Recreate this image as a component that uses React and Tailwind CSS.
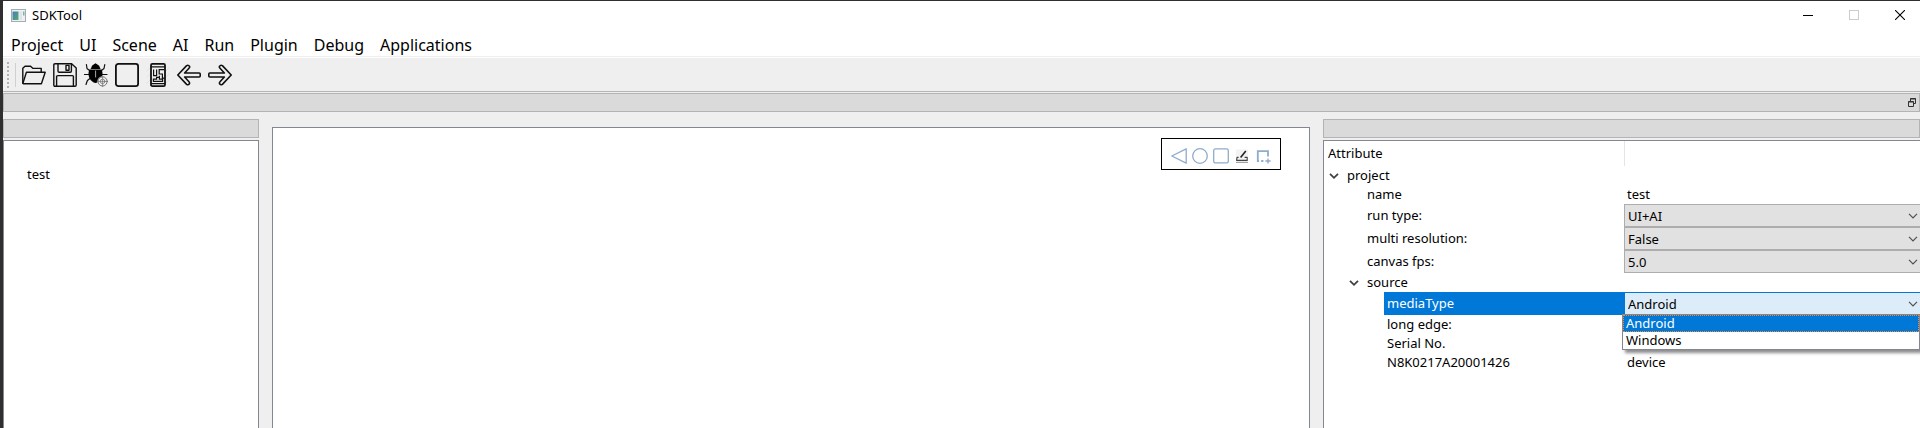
import { useState } from "react";

const MENUS = ["Project", "UI", "Scene", "AI", "Run", "Plugin", "Debug", "Applications"];

function Icon({ children, size = 24, view = 24, className = "" }) {
  return (
    <svg
      width={size}
      height={size}
      viewBox={`0 0 ${view} ${view}`}
      fill="none"
      stroke="#111"
      strokeWidth="1.4"
      strokeLinejoin="round"
      strokeLinecap="round"
      className={`shrink-0 ${className}`}
      aria-hidden="true"
    >
      {children}
    </svg>
  );
}

const TOOLS = [
  {
    name: "Open",
    art: (
      <>
        <path d="M0.8 20V5.2L3 3.2h5.6L11 5.4h8.2V9" />
        <path d="M0.9 20.4L4.4 9.2H23.2L19.4 20.8H1.4z" />
      </>
    ),
  },
  {
    name: "Save",
    art: (
      <>
        <path d="M2 0.8H18.6L23.2 5V22Q23.2 23.2 22 23.2H2Q0.8 23.2 0.8 22V2Q0.8 0.8 2 0.8z" />
        <path d="M5 0.8V8Q5 9.2 6.2 9.2H17.2Q18.4 9.2 18.4 8V0.8M13 2.4h3v4.8h-3z" />
        <path d="M3.6 23V13.6Q3.6 12.6 4.8 12.6H19.4Q20.4 12.6 20.4 13.6V23" />
      </>
    ),
  },
  {
    name: "Debug",
    art: (
      <>
        <path
          strokeWidth="1.2"
          d="M5.5 7.5L3 5.5L2.4 1.5M17.5 7.5L20 5.5L20.8 1.5M5 11.5H0.5M18 11.5h5M6 15.5L3.4 17.5L2 21.5"
        />
        <path fill="#000" stroke="none" d="M7 5.4Q7.6 2 9.6 1.4L11.5 0.2L13.4 1.4Q15.6 2 16.2 5.4L17 6H6z" />
        <path fill="#000" stroke="none" d="M5.4 6.6H17.6Q19.4 11 17.6 15Q15.4 19.2 11.5 20Q7.6 19.2 5.4 15Q3.6 11 5.4 6.6z" />
        <path stroke="#bbb" strokeWidth="0.9" d="M11.6 8v6" />
        <circle cx="18.6" cy="18.4" r="5.2" fill="#efefef" stroke="none" />
        <circle cx="18.6" cy="18.4" r="4.6" stroke="#666" strokeWidth="0.9" />
        <circle cx="18.6" cy="18.4" r="2.3" stroke="#777" strokeWidth="0.8" />
        <path stroke="#777" strokeWidth="0.8" d="M18.6 13v11M13.2 18.4H24" />
      </>
    ),
  },
  {
    name: "Stop",
    art: <rect x="0.9" y="0.9" width="22.2" height="22.2" rx="2.4" strokeWidth="1.8" />,
  },
  {
    name: "Phone script",
    art: (
      <>
        <path stroke="#ddd" strokeWidth="0.8" d="M1 8l3-3M1 14l3-3M1 20l3-3M20 8l3-3M20 14l3-3M20 20l3-3" />
        <rect x="5" y="0.9" width="14" height="22.2" rx="1.4" strokeWidth="1.8" />
        <path strokeWidth="1.2" d="M5.4 3.8H18.6M5.4 20.6H18.6" />
        <path strokeWidth="1.2" strokeLinejoin="miter" strokeLinecap="butt" d="M7.6 6.6V12.6H10.6V6.6M18.2 6.6H13.2V11H16.4V15.2H18.4M13.4 12.8V16.2H16.6V18.4H7.4V16.2H10.6V14.4H13.4" />
      </>
    ),
  },
  {
    name: "Back",
    art: (
      <path d="M0.8 12L9.6 2.6Q11.4 1.6 12.6 3.4Q12.8 4.6 12 5.2L7.6 10H22.2Q23.2 10 23.2 11V13Q23.2 14 22.2 14H7.6L12 18.8Q12.8 19.6 12.4 20.8Q11.2 22.4 9.6 21.4z" strokeWidth="1.6" />
    ),
  },
  {
    name: "Forward",
    art: (
      <path d="M23.2 12L14.4 2.6Q12.6 1.6 11.4 3.4Q11.2 4.6 12 5.2L16.4 10H1.8Q0.8 10 0.8 11V13Q0.8 14 1.8 14H16.4L12 18.8Q11.2 19.6 11.6 20.8Q12.8 22.4 14.4 21.4z" strokeWidth="1.6" />
    ),
  },
];

function TitleBar() {
  return (
    <header className="flex h-7 items-center bg-white pl-2">
      <svg width="15" height="13" viewBox="0 0 15 13" className="shrink-0" aria-hidden="true">
        <defs>
          <linearGradient id="appArt" x1="0" y1="0" x2="1" y2="1">
            <stop offset="0" stopColor="#4d79b8" />
            <stop offset="1" stopColor="#4fae74" />
          </linearGradient>
        </defs>
        <rect x="0.5" y="0.5" width="14" height="12" fill="#eef0f2" stroke="#a3abb3" />
        <rect x="1.5" y="2.5" width="6" height="8.5" fill="url(#appArt)" />
        <rect x="8.5" y="2.5" width="2.5" height="8.5" fill="#dfe3e8" />
        <rect x="12" y="2.5" width="1.5" height="4" fill="#7ab5a8" />
      </svg>
      <h1 className="flex-1 pl-1.5 text-[13px] leading-5">SDKTool</h1>
      <button type="button" aria-label="Minimize" className="grid h-7 w-[46px] place-items-center">
        <svg width="10" height="10" viewBox="0 0 10 10" aria-hidden="true">
          <path d="M0 5.5H10" stroke="#000" />
        </svg>
      </button>
      <button type="button" aria-label="Maximize" disabled className="mr-[3px] grid h-7 w-[46px] place-items-center">
        <svg width="10" height="10" viewBox="0 0 10 10" aria-hidden="true">
          <rect x="0.5" y="0.5" width="9" height="9" fill="none" stroke="#ccc" />
        </svg>
      </button>
      <button type="button" aria-label="Close" className="grid h-7 w-10 place-items-center">
        <svg width="10" height="10" viewBox="0 0 10 10" aria-hidden="true">
          <path d="M0 0L10 10M10 0L0 10" stroke="#000" strokeWidth="1.1" />
        </svg>
      </button>
    </header>
  );
}

function DockTitle({ children }) {
  return (
    <div className="flex h-[19px] shrink-0 items-center justify-end border border-[#b4b4b4] bg-[#dadada] pr-[3px]">
      {children}
    </div>
  );
}

function Chevron() {
  return (
    <svg width="10" height="10" viewBox="0 0 10 10" className="shrink-0" fill="none" stroke="#404040" strokeWidth="1.8" aria-hidden="true">
      <path d="M1 2.8L5 6.8L9 2.8" />
    </svg>
  );
}

function Combo({ id, value, options, active = false }) {
  const [current, setCurrent] = useState(value);
  return (
    <div className="grid items-center">
      <select
        id={id}
        value={current}
        onChange={(e) => setCurrent(e.target.value)}
        className={`col-start-1 row-start-1 h-[23px] w-full appearance-none border border-r-0 pl-[3px] text-[13px] leading-5 outline-none ${
          active ? "border-[#0078d7] bg-[#dcecf9]" : "border-[#adadad] bg-[#e1e1e1]"
        }`}
      >
        {options.map((o) => (
          <option key={o}>{o}</option>
        ))}
      </select>
      <svg
        width="10"
        height="6"
        viewBox="0 0 10 6"
        className="pointer-events-none col-start-1 row-start-1 mr-0.5 justify-self-end"
        fill="none"
        stroke="#505050"
        strokeWidth="1.2"
        aria-hidden="true"
      >
        <path d="M1 0.8L5 4.8L9 0.8" />
      </svg>
    </div>
  );
}

function ComboRow({ id, label, value, options }) {
  return (
    <tr className="h-[23px]">
      <th scope="row" className="pl-[43px] text-left font-normal">
        <label htmlFor={id}>{label}</label>
      </th>
      <td>
        <Combo id={id} value={value} options={options} />
      </td>
    </tr>
  );
}

function TextRow({ label, value, indent }) {
  return (
    <tr className="h-[19px]">
      <th scope="row" className={`text-left font-normal ${indent}`}>{label}</th>
      <td className="pl-[3px]">{value}</td>
    </tr>
  );
}

function GroupRow({ label, indent }) {
  return (
    <tr className="h-[19px]">
      <th scope="rowgroup" colSpan={2} className={`text-left font-normal ${indent}`}>
        <button type="button" aria-expanded="true" className="flex items-center gap-2">
          <Chevron />
          {label}
        </button>
      </th>
    </tr>
  );
}

function AttributeTree() {
  return (
    <table className="w-full table-fixed border-collapse text-[13px] leading-[19px]">
      <colgroup>
        <col className="w-[300px]" />
        <col />
      </colgroup>
      <thead>
        <tr className="h-[25px]">
          <th scope="col" className="border-r border-[#e5e5e5] pl-1 text-left font-normal">Attribute</th>
          <td />
        </tr>
      </thead>
      <tbody>
        <GroupRow label="project" indent="pl-[5px]" />
        <TextRow label="name" value="test" indent="pl-[43px]" />
        <ComboRow id="run-type" label="run type:" value="UI+AI" options={["UI+AI", "UI", "AI"]} />
        <ComboRow id="multi-resolution" label="multi resolution:" value="False" options={["False", "True"]} />
        <ComboRow id="canvas-fps" label="canvas fps:" value="5.0" options={["5.0", "10.0"]} />
        <GroupRow label="source" indent="pl-[25px]" />
        <tr className="h-[23px]">
          <th scope="row" className="pl-[60px] text-left font-normal">
            <label htmlFor="media-type" className="block bg-[#0078d7] pl-[3px] leading-[23px] text-white">mediaType</label>
          </th>
          <td className="relative">
            <Combo id="media-type" value="Android" options={["Android", "Windows"]} active />
            <ul
              role="listbox"
              aria-label="mediaType"
              className="absolute top-[22px] right-0 -left-0.5 z-10 border border-[#828790] bg-white leading-[15px] shadow-[3px_3px_3px_rgba(0,0,0,0.45)]"
            >
              <li role="option" aria-selected="true" className="border border-dotted border-[#ff8728] bg-[#0078d7] pl-0.5 text-white">Android</li>
              <li role="option" aria-selected="false" className="border border-transparent pl-0.5">Windows</li>
            </ul>
          </td>
        </tr>
        <TextRow label="long edge:" value="" indent="pl-[63px]" />
        <TextRow label="Serial No." value="" indent="pl-[63px]" />
        <TextRow label="N8K0217A20001426" value="device" indent="pl-[63px]" />
      </tbody>
    </table>
  );
}

function CanvasTools() {
  const shapes = [
    { name: "Back key", art: <path d="M0.8 8L15.2 0.8V15.2z" /> },
    { name: "Home key", art: <circle cx="8" cy="8" r="7.3" /> },
    { name: "Menu key", art: <rect x="0.7" y="0.9" width="14.6" height="14" rx="1.6" /> },
    {
      name: "Edit",
      art: (
        <>
          <rect x="2" y="1.5" width="12" height="13" fill="#f3f3f3" stroke="none" />
          <path stroke="#444" strokeWidth="1.1" d="M4.6 9.4H3L2.6 12.4H13.2V9.4H10.6" />
          <path stroke="#222" strokeWidth="1.6" d="M6.6 9.6L11.8 3" />
          <path stroke="#999" strokeWidth="1" d="M2 14.4h12" />
        </>
      ),
    },
    {
      name: "Add region",
      art: (
        <>
          <path strokeWidth="1.8" strokeLinejoin="miter" d="M8.4 13H6.2M4 13H2.8V3.2H13V8.4" />
          <path strokeWidth="1.4" d="M13 10.4v5.2M10.4 13h5.2" />
        </>
      ),
    },
  ];
  return (
    <div className="flex h-8 w-[120px] items-center gap-[5px] border border-black bg-white pt-1 pl-[9px]">
      {shapes.map((s) => (
        <button key={s.name} type="button" aria-label={s.name}>
          <svg width="16" height="16" viewBox="0 0 16 16" fill="none" stroke="#8eaccd" strokeWidth="1.3" strokeLinejoin="round" className="block" aria-hidden="true">
            {s.art}
          </svg>
        </button>
      ))}
    </div>
  );
}

export default function App() {
  return (
    <div className="flex min-h-screen flex-col bg-[#2f2f2f] pt-px pl-[3px] font-['Noto_Sans','Noto_Sans_CJK_SC',sans-serif] text-black">
      <TitleBar />
      <nav aria-label="Main" className="flex h-7 items-center gap-4 border-b border-[#efefef] bg-white pt-1 pl-2 text-[16px] leading-6">
        {MENUS.map((m) => (
          <button key={m} type="button">{m}</button>
        ))}
      </nav>
      <div className="flex flex-1 flex-col bg-[#efefef]">
        <div role="toolbar" aria-label="Tools" className="flex h-[35px] items-center border-t border-b border-t-white border-b-[#b4b4b4] pl-1">
          <span className="h-[26px] border-l-2 border-dotted border-[#b0b0b0]" />
          <span className="ml-1.5 h-6 w-px bg-[#d0d0d0]" />
          <div className="flex gap-[7px] pl-1.5">
            {TOOLS.map((t) => (
              <button key={t.name} type="button" aria-label={t.name}>
                <Icon className="block">{t.art}</Icon>
              </button>
            ))}
          </div>
        </div>
        <div className="pt-px">
          <DockTitle>
            <button type="button" aria-label="Float panel">
              <svg width="8" height="9" viewBox="0 0 8 9" className="block" fill="none" stroke="#333" aria-hidden="true">
                <path d="M2.5 3V0.5H7.5V5.5H6M2 1H8" />
                <path d="M0.5 3.5H5.5V8.5H0.5zM0 4H6" />
              </svg>
            </button>
          </DockTitle>
        </div>
        <main className="flex flex-1 pt-[7px]">
          <aside className="flex w-64 shrink-0 flex-col gap-0.5">
            <DockTitle />
            <div className="flex-1 border border-b-0 border-[#828790] bg-white pt-6 pl-[23px] text-[13px] leading-[19px]">
              test
            </div>
          </aside>
          <section aria-label="Canvas" className="mx-[13px] mt-2 flex flex-1 items-start justify-end border border-b-0 border-[#828790] bg-white pt-2.5 pr-7">
            <CanvasTools />
          </section>
          <aside className="flex w-[597px] shrink-0 flex-col gap-0.5">
            <DockTitle />
            <div className="flex-1 border-t border-l border-[#828790] bg-white">
              <AttributeTree />
            </div>
          </aside>
        </main>
      </div>
    </div>
  );
}
